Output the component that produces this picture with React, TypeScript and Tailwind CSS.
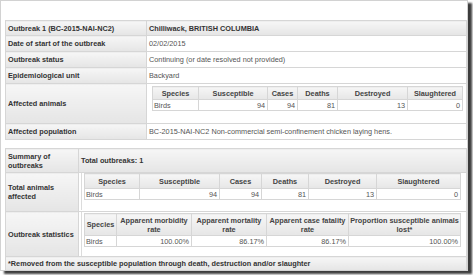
import React from "react";

const F = "font-['Liberation_Sans',Arial,sans-serif]";
const label =
  "border border-[#d6d6d6] bg-linear-to-b from-[#f6f6f6] to-[#e5e5e5] font-bold text-[#333] px-[2px] py-0 align-middle text-left";
const value = "border border-[#d6d6d6] bg-white text-[#555] px-[2px] py-0 align-middle text-left";
const th =
  "border border-[#d6d6d6] bg-linear-to-b from-[#f6f6f6] to-[#e6e6e6] font-bold text-[#444] px-[1px] py-0 text-center align-middle leading-[9px]";
const tdL = "border border-[#d6d6d6] bg-white text-[#555] px-[1px] py-0 text-left h-[11px]";
const tdR = "border border-[#d6d6d6] bg-white text-[#555] px-[2px] py-0 text-right h-[11px]";

function Row({ l, v, h = "h-[16px]" }: { l: string; v: string; h?: string }) {
  return (
    <tr>
      <td className={label + " " + h}>{l}</td>
      <td className={value + " " + h}>{v}</td>
    </tr>
  );
}

export default function App() {
  return (
    <div className={`w-[473px] h-[275px] bg-white ${F} text-[7.3px] leading-[9px]`}>
      <div className="w-[468px] h-[271px] border border-[#d2d2d2] bg-white shadow-[4px_3px_2px_#3c3c3c] pl-[4px] pt-[19px] overflow-hidden">
        <table className="border-collapse table-fixed w-[462px]">
          <colgroup>
            <col className="w-[141px]" />
            <col />
          </colgroup>
          <tbody>
            <tr>
              <td className={label + " h-[15px]"}>Outbreak 1 (BC-2015-NAI-NC2)</td>
              <td className={label + " h-[15px]"}>Chilliwack, BRITISH COLUMBIA</td>
            </tr>
            <Row l="Date of start of the outbreak" v="02/02/2015" />
            <Row l="Outbreak status" v="Continuing (or date resolved not provided)" />
            <Row l="Epidemiological unit" v="Backyard" />
            <tr>
              <td className={label + " h-[40px]"}>Affected animals</td>
              <td className="border border-[#d6d6d6] bg-white align-top pl-[5px] pr-[4px] pt-[2px] pb-[11px] h-[40px]">
                <table className="border-collapse table-fixed w-[310px]">
                  <colgroup>
                    <col className="w-[46px]" />
                    <col className="w-[69px]" />
                    <col className="w-[30px]" />
                    <col className="w-[40px]" />
                    <col className="w-[70px]" />
                    <col className="w-[55px]" />
                  </colgroup>
                  <tbody>
                    <tr className="h-[13px]">
                      <td className={th}>Species</td>
                      <td className={th}>Susceptible</td>
                      <td className={th}>Cases</td>
                      <td className={th}>Deaths</td>
                      <td className={th}>Destroyed</td>
                      <td className={th}>Slaughtered</td>
                    </tr>
                    <tr>
                      <td className={tdL}>Birds</td>
                      <td className={tdR}>94</td>
                      <td className={tdR}>94</td>
                      <td className={tdR}>81</td>
                      <td className={tdR}>13</td>
                      <td className={tdR}>0</td>
                    </tr>
                  </tbody>
                </table>
              </td>
            </tr>
            <Row
              l="Affected population"
              v="BC-2015-NAI-NC2 Non-commercial semi-confinement chicken laying hens."
            />
          </tbody>
        </table>

        <table className="border-collapse table-fixed w-[462px] mt-[8px]">
          <colgroup>
            <col className="w-[73px]" />
            <col />
          </colgroup>
          <tbody>
            <tr>
              <td className={label + " h-[24px]"}>Summary of outbreaks</td>
              <td className={label + " h-[24px]"}>Total outbreaks: 1</td>
            </tr>
            <tr>
              <td className={label + " h-[39px]"}>Total animals affected</td>
              <td className="border border-[#d6d6d6] bg-white align-top pl-[2px] pr-[6px] pt-0 pb-0 h-[39px]">
                <div className="border-l border-[#dcdcdc] pl-[2px] pb-[10px]">
                  <table className="border-collapse table-fixed w-[376px]">
                    <colgroup>
                      <col className="w-[55px]" />
                      <col className="w-[80px]" />
                      <col className="w-[42px]" />
                      <col className="w-[47px]" />
                      <col className="w-[68px]" />
                      <col className="w-[84px]" />
                    </colgroup>
                    <tbody>
                      <tr className="h-[15px]">
                        <td className={th}>Species</td>
                        <td className={th}>Susceptible</td>
                        <td className={th}>Cases</td>
                        <td className={th}>Deaths</td>
                        <td className={th}>Destroyed</td>
                        <td className={th}>Slaughtered</td>
                      </tr>
                      <tr>
                        <td className={tdL}>Birds</td>
                        <td className={tdR}>94</td>
                        <td className={tdR}>94</td>
                        <td className={tdR}>81</td>
                        <td className={tdR}>13</td>
                        <td className={tdR}>0</td>
                      </tr>
                    </tbody>
                  </table>
                </div>
              </td>
            </tr>
            <tr>
              <td className={label + " h-[44px]"}>Outbreak statistics</td>
              <td className="border border-[#d6d6d6] bg-white align-top pl-[2px] pr-[6px] pt-0 pb-0 h-[44px]">
                <div className="border-l border-[#dcdcdc] pl-[2px] pt-[1px] pb-[9px]">
                  <table className="border-collapse table-fixed w-[376px]">
                    <colgroup>
                      <col className="w-[32px]" />
                      <col className="w-[75px]" />
                      <col className="w-[75px]" />
                      <col className="w-[82px]" />
                      <col className="w-[112px]" />
                    </colgroup>
                    <tbody>
                      <tr className="h-[22px]">
                        <td className={th}>Species</td>
                        <td className={th}>Apparent morbidity rate</td>
                        <td className={th}>Apparent mortality rate</td>
                        <td className={th}>Apparent case fatality rate</td>
                        <td className={th}>Proportion susceptible animals lost*</td>
                      </tr>
                      <tr>
                        <td className={tdL}>Birds</td>
                        <td className={tdR}>100.00%</td>
                        <td className={tdR}>86.17%</td>
                        <td className={tdR}>86.17%</td>
                        <td className={tdR}>100.00%</td>
                      </tr>
                    </tbody>
                  </table>
                </div>
              </td>
            </tr>
            <tr>
              <td colSpan={2} className={label + " h-[14px]"}>
                *Removed from the susceptible population through death, destruction and/or slaughter
              </td>
            </tr>
          </tbody>
        </table>
      </div>
    </div>
  );
}
